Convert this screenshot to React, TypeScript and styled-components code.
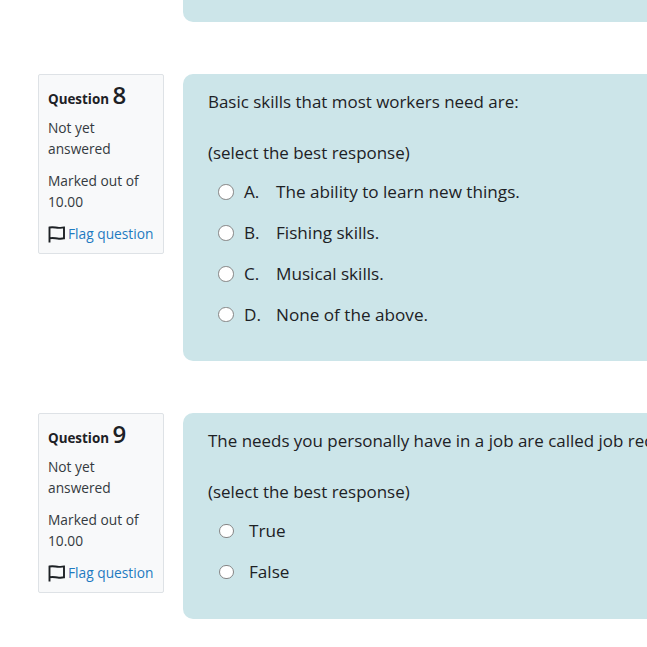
import React from 'react';
import styled, { createGlobalStyle } from 'styled-components';

const GlobalStyle = createGlobalStyle`
    html, body {
        margin: 0;
        height: 647px;
        overflow: hidden;
        background: #fff;
        font-family: "Open Sans", "Noto Sans", sans-serif;
        color: #343a40;
    }
`

const Page = styled.div`
    width: 1000px;
    padding: 0 0 0 38px;
    margin-top: -30px;
    display: flex;
    flex-direction: column;
    gap: 52px;
`

const TopStub = styled.div`
    margin-left: 145px;
    height: 52px;
    background: #cce5e9;
    border-radius: 0 0 10px 10px;
`

const Row = styled.section`
    display: flex;
    align-items: flex-start;
    gap: 19px;
`

const Info = styled.aside`
    box-sizing: border-box;
    flex: 0 0 126px;
    height: 180px;
    padding: 8px 9px;
    background: #f8f9fa;
    border: 1px solid #dee2e6;
    border-radius: 2px;
    font-size: 13.75px;
    line-height: 21px;
`

const Title = styled.h3`
    margin: 0 0 6px;
    font-size: 13.4px;
    font-weight: 700;
    line-height: 24px;
    color: #1d2125;
`

const Num = styled.span`
    font-size: 24px;
    font-weight: 600;
`

const State = styled.div`
    margin-bottom: 11px;
`

const Flag = styled.a`
    display: flex;
    align-items: center;
    gap: 1px;
    color: #1f7bc1;
    margin-top: 11px;
    margin-left: -1px;
`

const Content = styled.div<{ $height: number }>`
    box-sizing: border-box;
    flex: 1;
    height: ${p => p.$height}px;
    padding: 14px 25px;
    background: #cce5e9;
    border-radius: 10px 0 0 10px;
    font-size: 16.95px;
    line-height: 28px;
    color: #1d2125;
    white-space: nowrap;
`

const Prompt = styled.p`
    margin: 0 0 23px;
`

const Hint = styled.p`
    margin: 0 0 11px;
`

const Answers = styled.div`
    display: flex;
    flex-direction: column;
    gap: 12.9px;
    font-size: 17.15px;
`

const Answer = styled.label`
    display: flex;
    align-items: center;
    height: 28px;
    padding-left: 10px;
`

const Radio = styled.span<{ $small?: boolean }>`
    box-sizing: border-box;
    width: ${p => (p.$small ? 14.5 : 15.5)}px;
    height: ${p => (p.$small ? 14.5 : 15.5)}px;
    margin-left: ${p => (p.$small ? 1 : 0)}px;
    margin-right: ${p => (p.$small ? 15.5 : 10.5)}px;
    background: #fff;
    border: 1.5px solid #858585;
    border-radius: 50%;
`

const Letter = styled.span`
    width: 32px;
`

const FlagIcon = () => (
    <svg width="20" height="20" viewBox="0 0 20 20" fill="none" stroke="#1d2125" strokeWidth="1.9">
        <path d="M2.5 18.5V3.5c4-1 6 .4 9.5.4 2 0 4-.4 5-.4v10.8c-1 0-3 .4-5 .4-3.5 0-5.5-1.4-9.5-.4" />
    </svg>
)

const QuestionInfo = ({ n }: { n: number }) => (
    <Info>
        <Title>Question <Num>{n}</Num></Title>
        <State>Not yet<br />answered</State>
        <div>Marked out of<br />10.00</div>
        <Flag><FlagIcon />Flag question</Flag>
    </Info>
)

const App = () => (
    <Page>
        <GlobalStyle />
        <TopStub />
        <Row>
            <QuestionInfo n={8} />
            <Content $height={287}>
                <Prompt>Basic skills that most workers need are:</Prompt>
                <Hint>(select the best response)</Hint>
                <Answers>
                    {[['A.', 'The ability to learn new things.'], ['B.', 'Fishing skills.'], ['C.', 'Musical skills.'], ['D.', 'None of the above.']].map(([l, t]) => (
                        <Answer key={l}><Radio /><Letter>{l}</Letter>{t}</Answer>
                    ))}
                </Answers>
            </Content>
        </Row>
        <Row>
            <QuestionInfo n={9} />
            <Content $height={206}>
                <Prompt>The needs you personally have in a job are called job requirements.</Prompt>
                <Hint>(select the best response)</Hint>
                <Answers>
                    {['True', 'False'].map(t => (
                        <Answer key={t}><Radio $small />{t}</Answer>
                    ))}
                </Answers>
            </Content>
        </Row>
    </Page>
)

export default App;
